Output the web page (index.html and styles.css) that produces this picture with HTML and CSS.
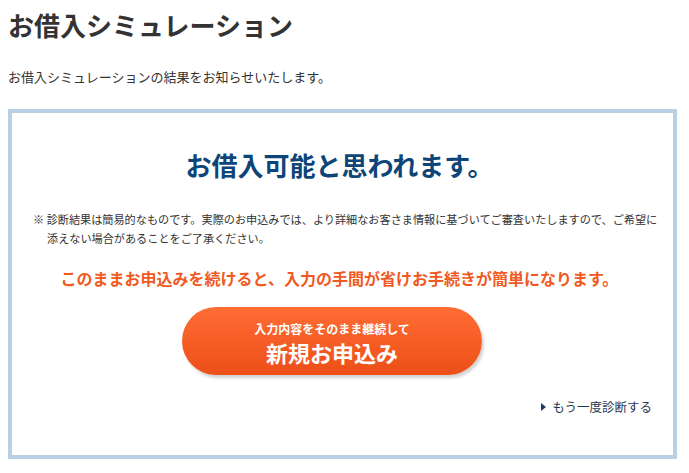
FILE: index.html
```html
<!DOCTYPE html>
<html lang="ja">
<head>
<meta charset="utf-8">
<title>お借入シミュレーション</title>
<link rel="stylesheet" href="styles.css">
</head>
<body>
<h1 class="page-title">お借入シミュレーション</h1>
<p class="lead">お借入シミュレーションの結果をお知らせいたします。</p>
<section class="result-box">
  <h2 class="result-title">お借入可能と思われます。</h2>
  <p class="note">※ 診断結果は簡易的なものです。実際のお申込みでは、より詳細なお客さま情報に基づいてご審査いたしますので、ご希望に添えない場合があることをご了承ください。</p>
  <p class="promo">このままお申込みを続けると、入力の手間が省けお手続きが簡単になります。</p>
  <div class="btn-row">
    <a class="apply-btn" href="#">
      <span class="btn-sub">入力内容をそのまま継続して</span>
      <span class="btn-main">新規お申込み</span>
    </a>
  </div>
  <div class="retry-row">
    <a class="retry-link" href="#"><span class="tri"></span>もう一度診断する</a>
  </div>
</section>
</body>
</html>
```
FILE: styles.css
```css
body {
  margin: 8px;
  font-family: "Noto Sans CJK JP", "Noto Sans", sans-serif;
  color: #333;
  background: #fff;
}
.page-title {
  margin: 0;
  font-size: 26px;
  line-height: 34px;
  font-weight: bold;
  color: #333;
}
.lead {
  margin: 25px 0 0;
  font-size: 13px;
  line-height: 20px;
  color: #333;
}
.result-box {
  box-sizing: border-box;
  width: 669px;
  margin-top: 22px;
  border: 4px solid #b8d0e6;
  padding: 34px 21px 38px 21px;
}
.result-title {
  margin: 0;
  text-align: center;
  font-size: 26px;
  line-height: 36px;
  font-weight: bold;
  color: #0d4579;
  padding-right: 6px;
}
.note {
  margin: 27px -8px 0 0;
  font-size: 11.15px;
  line-height: 19px;
  color: #333;
  padding-left: 14px;
  text-indent: -14px;
}
.promo {
  margin: 18px 0 0;
  text-align: center;
  font-size: 16px;
  line-height: 24px;
  font-weight: bold;
  color: #f05a22;
  padding-right: 6px;
}
.btn-row {
  display: flex;
  justify-content: center;
  margin-top: 17px;
  padding-right: 21px;
}
.apply-btn {
  box-sizing: border-box;
  width: 300px;
  height: 68px;
  padding-top: 2px;
  border-radius: 34px;
  background: linear-gradient(#ff6d35, #ec4f17);
  box-shadow: 2px 3px 3px rgba(0, 0, 0, 0.18);
  display: flex;
  flex-direction: column;
  align-items: center;
  justify-content: center;
  text-decoration: none;
  color: #fff;
  font-weight: bold;
}
.btn-sub {
  font-size: 12px;
  line-height: 19px;
}
.btn-main {
  font-size: 22px;
  line-height: 28px;
}
.retry-row {
  display: flex;
  justify-content: flex-end;
  margin-top: 22px;
}
.retry-link {
  display: flex;
  align-items: center;
  font-size: 12.5px;
  line-height: 20px;
  color: #1f3552;
  text-decoration: none;
}
.tri {
  width: 0;
  height: 0;
  border-top: 4px solid transparent;
  border-bottom: 4px solid transparent;
  border-left: 5px solid #1f3a66;
  margin-right: 6px;
}
```
